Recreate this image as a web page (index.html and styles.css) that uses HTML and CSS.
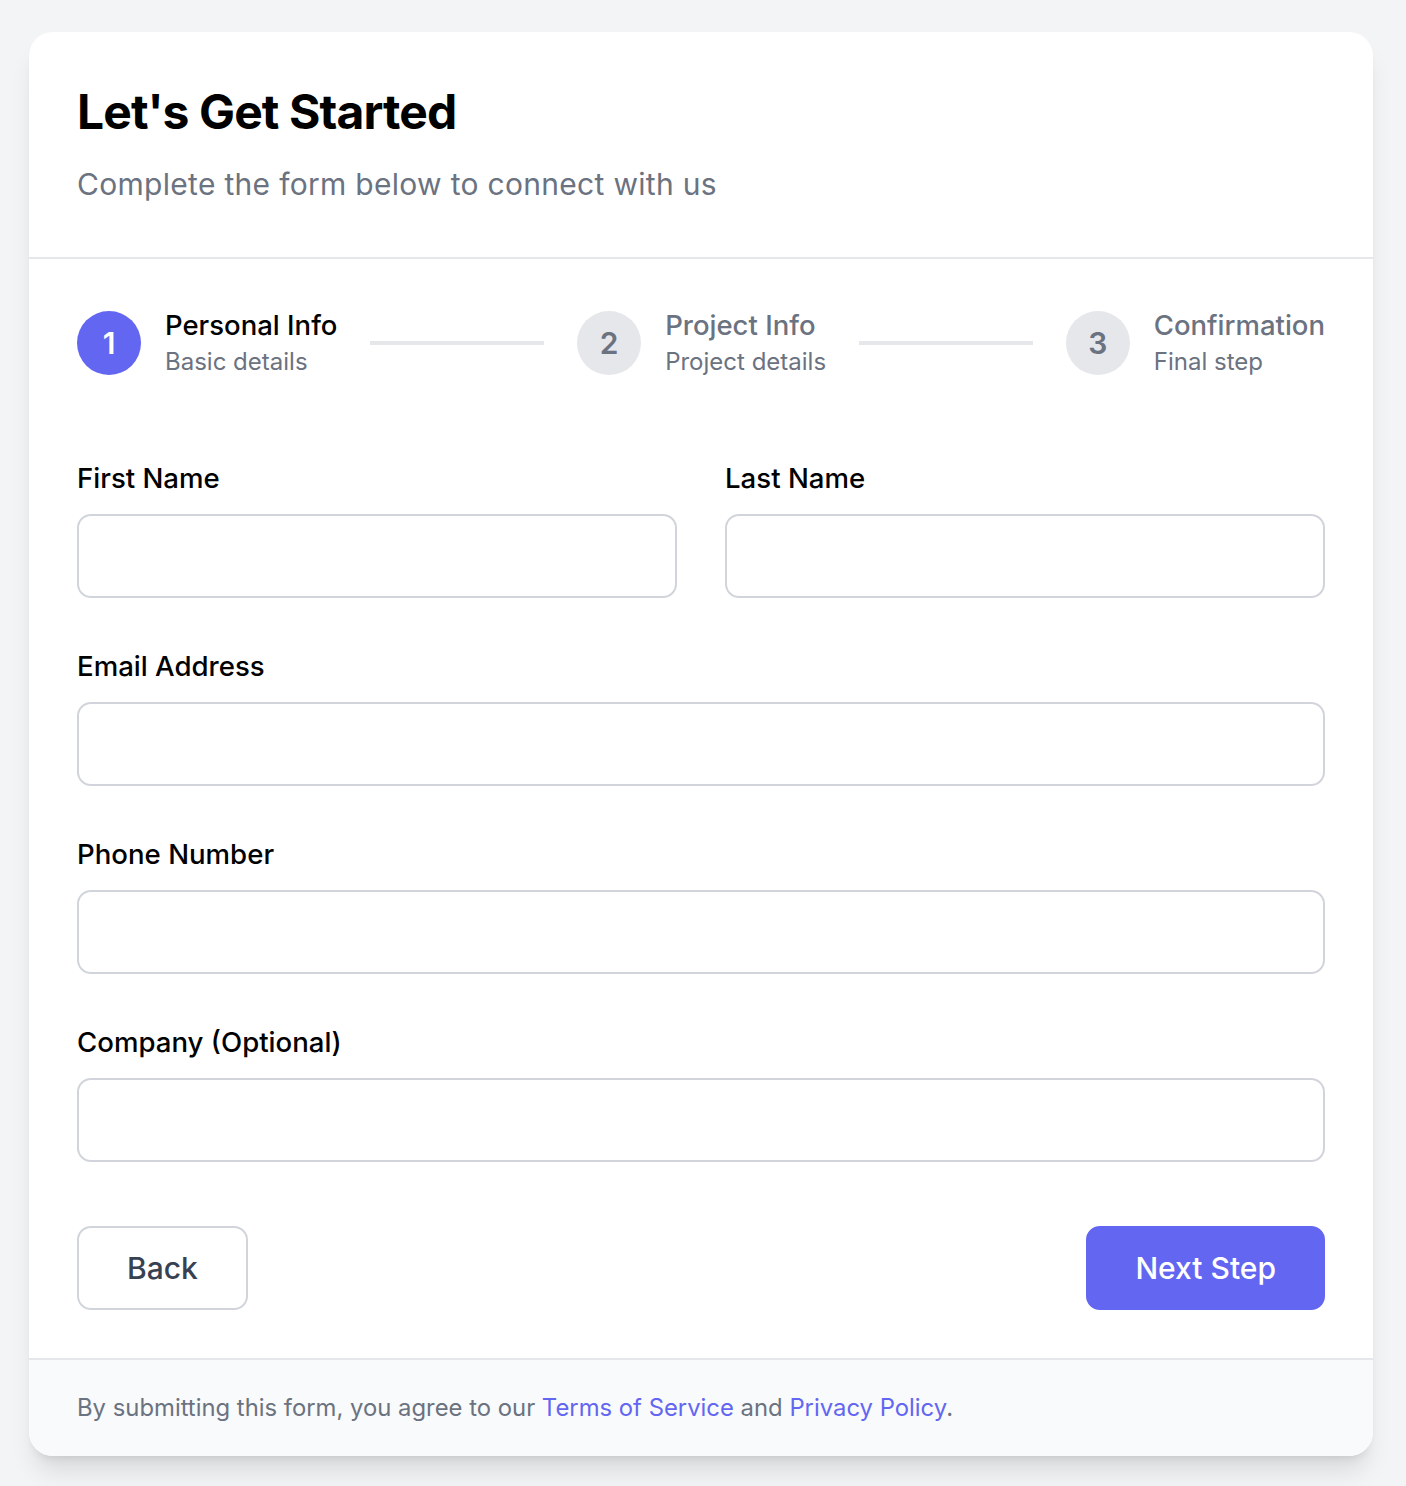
FILE: index.html
```html
<!DOCTYPE html>
<html lang="en">
<head>
<meta charset="utf-8">
<title>Let's Get Started</title>
<link rel="stylesheet" href="styles.css">
</head>
<body>
<div class="card">
  <header class="card-header">
    <h1 class="title">Let's Get Started</h1>
    <p class="subtitle">Complete the form below to connect with us</p>
  </header>
  <main class="card-body">
    <div class="steps">
      <div class="step active">
        <div class="step-circle">1</div>
        <div class="step-text">
          <div class="step-title">Personal Info</div>
          <div class="step-sub">Basic details</div>
        </div>
      </div>
      <div class="step-line"></div>
      <div class="step">
        <div class="step-circle">2</div>
        <div class="step-text">
          <div class="step-title">Project Info</div>
          <div class="step-sub">Project details</div>
        </div>
      </div>
      <div class="step-line"></div>
      <div class="step">
        <div class="step-circle">3</div>
        <div class="step-text">
          <div class="step-title">Confirmation</div>
          <div class="step-sub">Final step</div>
        </div>
      </div>
    </div>
    <form class="form">
      <div class="row-2">
        <div class="field">
          <label class="label" for="fn">First Name</label>
          <input class="input" id="fn" type="text">
        </div>
        <div class="field">
          <label class="label" for="ln">Last Name</label>
          <input class="input" id="ln" type="text">
        </div>
      </div>
      <div class="field">
        <label class="label" for="em">Email Address</label>
        <input class="input" id="em" type="email">
      </div>
      <div class="field">
        <label class="label" for="ph">Phone Number</label>
        <input class="input" id="ph" type="tel">
      </div>
      <div class="field">
        <label class="label" for="co">Company (Optional)</label>
        <input class="input" id="co" type="text">
      </div>
      <div class="actions">
        <button type="button" class="btn btn-back">Back</button>
        <button type="button" class="btn btn-next">Next Step</button>
      </div>
    </form>
  </main>
  <footer class="card-footer">
    By submitting this form, you agree to our <a href="#" class="link">Terms of Service</a> and <a href="#" class="link">Privacy Policy</a>.
  </footer>
</div>
</body>
</html>
```

FILE: styles.css
```css
* { box-sizing: border-box; }
html, body { margin: 0; }
body {
  background: #f3f4f6;
  font-family: Inter, "Noto Sans", "Liberation Sans", sans-serif;
  padding: 32px 33px 30px 29px;
  color: #000;
}
.card {
  background: #fff;
  border-radius: 24px;
  box-shadow: 0 20px 25px -5px rgba(0,0,0,0.10), 0 8px 10px -6px rgba(0,0,0,0.10);
  overflow: hidden;
}
.card-header {
  padding: 56px 48px 56px;
  border-bottom: 2px solid #e5e7eb;
}
.title {
  margin: 0;
  font-size: 48px;
  line-height: 48px;
  font-weight: 700;
  color: #000;
  letter-spacing: -0.9px;
}
.subtitle {
  margin: 31px 0 0;
  font-size: 30px;
  line-height: 34px;
  color: #6b7280;
  letter-spacing: 0.3px;
}
.card-body {
  padding: 49px 48px 48px;
}
.steps {
  display: flex;
  align-items: center;
}
.step {
  display: flex;
  align-items: center;
  gap: 24px;
}
.step-circle {
  width: 64px;
  height: 64px;
  border-radius: 50%;
  background: #e5e7eb;
  color: #6b7280;
  display: flex;
  align-items: center;
  justify-content: center;
  font-size: 30px;
  font-weight: 600;
  flex: none;
}
.step.active .step-circle {
  background: #6366f1;
  color: #fff;
}
.step-text {
  display: flex;
  flex-direction: column;
  gap: 4px;
}
.step-title {
  font-size: 27.5px;
  line-height: 34px;
  font-weight: 500;
  color: #6b7280;
}
.step.active .step-title { color: #000; }
.step-sub {
  font-size: 24px;
  line-height: 32px;
  color: #6b7280;
}
.step-line {
  flex: 1;
  height: 4px;
  background: #e5e7eb;
  margin: 0 33px;
}
.form {
  margin-top: 84px;
  display: flex;
  flex-direction: column;
  gap: 52px;
}
.row-2 {
  display: grid;
  grid-template-columns: 1fr 1fr;
  gap: 48px;
}
.field {
  display: flex;
  flex-direction: column;
}
.label {
  font-size: 27.6px;
  line-height: 32px;
  font-weight: 500;
  color: #000;
  margin-bottom: 20px;
}
.input {
  height: 84px;
  border: 2px solid #d1d5db;
  border-radius: 14px;
  background: #fff;
  font: inherit;
  font-size: 26px;
  padding: 0 24px;
  width: 100%;
}
.actions {
  display: flex;
  justify-content: space-between;
  margin-top: 12px;
}
.btn {
  height: 84px;
  padding: 0 48px;
  border-radius: 14px;
  font-family: inherit;
  font-size: 30px;
  font-weight: 500;
  cursor: pointer;
}
.btn-back {
  background: #fff;
  border: 2px solid #d1d5db;
  color: #374151;
}
.btn-next {
  background: #6366f1;
  border: 2px solid #6366f1;
  color: #fff;
  padding: 0 47px;
}
.card-footer {
  background: #f9fafb;
  border-top: 2px solid #e5e7eb;
  padding: 32px 48px;
  font-size: 23.85px;
  line-height: 32px;
  color: #6b7280;
}
.link {
  color: #6366f1;
  text-decoration: none;
}
```
